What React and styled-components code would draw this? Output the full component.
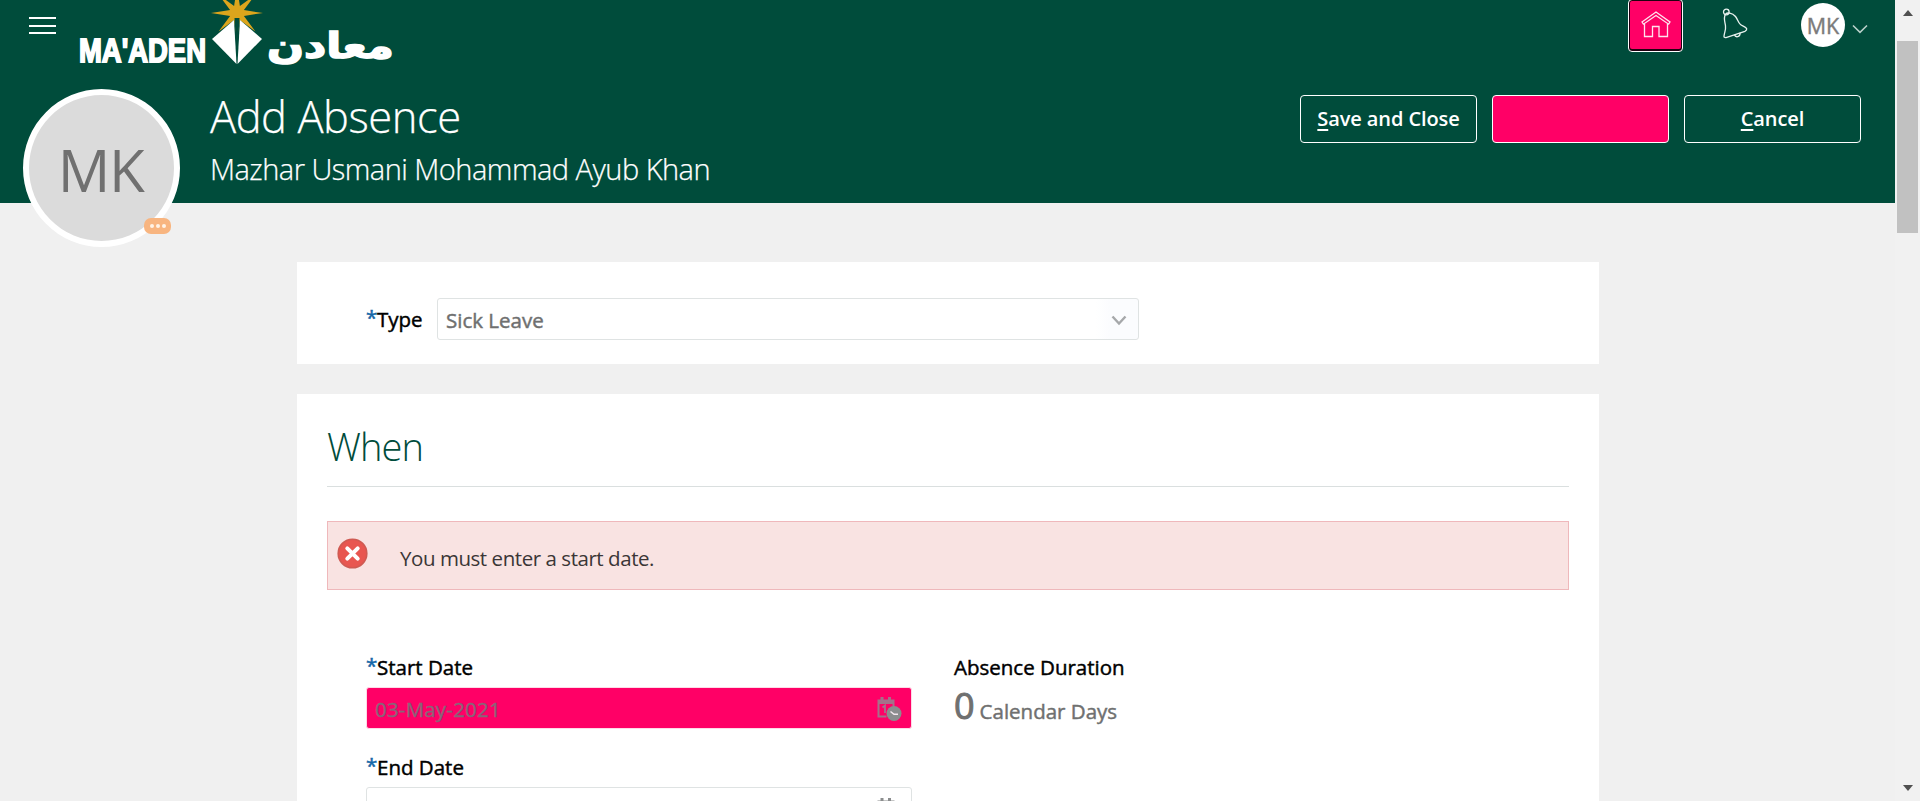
import React from "react";
import styled, { createGlobalStyle } from "styled-components";

const green = "#004c3b";
const pink = "#ff0066";

const GlobalStyle = createGlobalStyle`
  * { box-sizing: border-box; }
  html, body { margin: 0; height: 801px; overflow: hidden; background: #f0f0f0; }
  body { font-family: "Open Sans", "Noto Sans", sans-serif; color: #000; }
`;

const Window = styled.div`
  display: flex;
  height: 801px;
  overflow: hidden;
`;

const Page = styled.div`
  width: 1895px;
  height: 801px;
  overflow: hidden;
`;

const Header = styled.header`
  height: 203px;
  background: ${green};
  color: #fff;
`;

const TopBar = styled.div`
  height: 72px;
  display: flex;
  align-items: flex-start;
`;

const MenuButton = styled.div`
  width: 27px;
  margin: 17px 0 0 29px;
  display: flex;
  flex-direction: column;
  gap: 5.5px;
`;

const MenuLine = styled.span`
  height: 2px;
  background: #fff;
`;

const Logo = styled.svg`
  display: block;
  margin-left: 19px;
`;

const TopActions = styled.div`
  margin-left: auto;
  display: flex;
  align-items: flex-start;
`;

const HomeButton = styled.div`
  width: 55px;
  height: 53px;
  margin-top: -1px;
  border: 1px solid #fff;
  border-radius: 4px;
  background: #200010;
  padding: 1px 1px 2px;
  display: flex;
`;

const HomeFill = styled.div`
  flex: 1;
  border-radius: 2px;
  background: ${pink};
  display: flex;
  justify-content: center;
  padding-top: 9px;
`;

const BellIcon = styled.svg`
  margin: 8px 0 0 38px;
`;

const UserBadge = styled.div`
  width: 44px;
  height: 44px;
  margin: 3px 0 0 51px;
  border-radius: 50%;
  background: #fff;
  color: #7b7b7b;
  font-size: 21.5px;
  line-height: 46px;
  letter-spacing: 0;
  -webkit-text-stroke: 0.4px #7b7b7b;
  display: flex;
  justify-content: center;
`;

const UserChevron = styled.svg`
  margin: 24px 27px 0 7px;
`;

const TitleRow = styled.div`
  display: flex;
  align-items: flex-start;
`;

const Avatar = styled.div`
  position: relative;
  width: 157px;
  height: 158px;
  margin: 17px 0 0 23px;
  border: 6px solid #fff;
  border-radius: 50%;
  background: #dbdbdb;
  color: #707070;
  font-size: 58.5px;
  line-height: 149px;
  letter-spacing: -1.5px;
  text-indent: -2px;
  text-align: center;
`;

const StatusBadge = styled.div`
  position: absolute;
  left: 115px;
  top: 123px;
  width: 27px;
  height: 16px;
  border-radius: 7px;
  background: #f8b580;
  display: flex;
  align-items: center;
  justify-content: center;
  gap: 2px;
`;

const Dot = styled.span`
  width: 4px;
  height: 4px;
  border-radius: 50%;
  background: #fff3e6;
`;

const Titles = styled.div`
  margin: 17px 0 0 30px;
  font-weight: 300;
  white-space: nowrap;
  -webkit-text-stroke: 0.25px #fff;
`;

const Title = styled.h1`
  margin: 0;
  font-weight: 300;
  font-size: 43.5px;
  line-height: 56px;
  letter-spacing: -0.45px;
`;

const Subtitle = styled.div`
  margin-top: 4px;
  font-size: 29px;
  line-height: 40px;
  letter-spacing: -0.52px;
`;

const Buttons = styled.div`
  display: flex;
  gap: 15px;
  margin: 23px 34px 0 auto;
`;

const Button = styled.div`
  width: 177px;
  height: 48px;
  border: 1px solid #fff;
  border-radius: 4px;
  background: ${(p) => (p.$hot ? pink : "transparent")};
  font-size: 20px;
  font-weight: 600;
  line-height: 46px;
  letter-spacing: -0.1px;
  text-align: center;
  white-space: nowrap;
  u { text-underline-offset: 3px; text-decoration-thickness: 2px; }
`;

const Content = styled.main`
  width: 1302px;
  margin: 59px 0 0 297px;
  display: flex;
  flex-direction: column;
  gap: 30px;
`;

const Card = styled.section`
  background: #fff;
  height: ${(p) => p.$height}px;
`;

const TypeRow = styled.div`
  display: flex;
  align-items: center;
  padding: 36px 0 0 69px;
`;

const Label = styled.div`
  display: flex;
  font-size: 20.5px;
  line-height: 28px;
  white-space: nowrap;
  -webkit-text-stroke: 0.45px #000;
`;

const Star = styled.span`
  width: 11px;
  color: #1567a8;
  line-height: 24px;
  -webkit-text-stroke: 0.5px #1567a8;
`;

const Select = styled.div`
  width: 702px;
  height: 42px;
  margin-left: auto;
  margin-right: 460px;
  border: 1px solid #dfe3e3;
  border-radius: 3px;
  background: linear-gradient(90deg, #fff 94%, #fbfcfe 96%);
  display: flex;
  align-items: center;
  justify-content: space-between;
  padding: 2px 11px 0 8px;
  color: #6f7070;
  font-size: 20.5px;
  line-height: 28px;
  -webkit-text-stroke: 0.45px #6f7070;
`;

const SectionTitle = styled.h2`
  margin: 0 30px;
  height: 93px;
  padding-top: 28px;
  border-bottom: 1px solid #dadfdf;
  color: ${green};
  font-size: 38px;
  font-weight: 300;
  line-height: 48px;
  letter-spacing: -0.9px;
`;

const ErrorBox = styled.div`
  height: 69px;
  margin: 34px 30px 0;
  border: 1px solid #efb8bb;
  background: #f9e3e2;
  display: flex;
  align-items: flex-start;
  color: #3b3636;
  font-size: 20.5px;
  line-height: 28px;
  letter-spacing: -0.45px;
  svg { margin: 16px 0 0 9px; }
`;

const ErrorText = styled.span`
  margin: 22px 0 0 32px;
  white-space: nowrap;
`;

const Form = styled.div`
  display: flex;
  margin: 63px 0 0 69px;
`;

const Fields = styled.div`
  width: 546px;
`;

const DateField = styled.div`
  height: 42px;
  margin: 6px 0 24px;
  border: 1px solid ${(p) => (p.$hot ? "#ffd9e6" : "#dfe3e3")};
  border-radius: 3px;
  background: ${(p) => (p.$hot ? pink : "#fff")};
  display: flex;
  justify-content: space-between;
  padding: 0 9px 0 8px;
  color: #8a6478;
  font-size: 20.5px;
  line-height: 43px;
  letter-spacing: 0.2px;
  -webkit-text-stroke: 0.4px #8a6478;
  svg { margin-top: ${(p) => (p.$hot ? 9 : 10)}px; }
`;

const Duration = styled.div`
  margin-left: 42px;
`;

const DurationValue = styled.div`
  display: flex;
  align-items: baseline;
  gap: 5px;
  color: #6f7070;
  font-size: 20.5px;
  line-height: 50px;
  white-space: nowrap;
  -webkit-text-stroke: 0.45px #6f7070;
`;

const BigNumber = styled.span`
  font-size: 36px;
  -webkit-text-stroke: 1px #6f7070;
`;

const Scrollbar = styled.div`
  width: 25px;
  background: #f1f1f1;
  display: flex;
  flex-direction: column;
  align-items: center;
`;

const Thumb = styled.div`
  width: 21px;
  height: 192px;
  margin-top: 25px;
  background: #c1c1c1;
`;

const Arrow = styled.span`
  width: 0;
  height: 0;
  border: 5.5px solid transparent;
  border-top-width: ${(p) => (p.$down ? 6 : 0)}px;
  border-bottom-width: ${(p) => (p.$down ? 0 : 6)}px;
  border-top-color: #505050;
  border-bottom-color: #505050;
  margin-top: ${(p) => (p.$down ? "auto" : "10px")};
  margin-bottom: ${(p) => (p.$down ? "10px" : "0")};
`;

function starPoints() {
  const pts = [];
  for (let i = 0; i < 16; i++) {
    const r = i % 2 ? 7.5 : 26;
    const a = (Math.PI * i) / 8;
    pts.push(`${(162 + r * Math.cos(a)).toFixed(1)},${(13 + r * Math.sin(a)).toFixed(1)}`);
  }
  return pts.join(" ");
}

function MaadenLogo() {
  return (
    <Logo width="325" height="70" viewBox="0 0 325 70">
      <polygon points={starPoints()} fill="#dca51c" />
      <polygon points="159,20 137,39 161.5,64" fill="#fff" />
      <polygon points="165,20 187,39 162.5,64" fill="#fff" />
      <polygon points="159.5,18 164.5,18 162,58" fill={green} />
      <text x="4" y="62" fill="#fff" stroke="#fff" strokeWidth="1.8" fontFamily="'Liberation Sans', sans-serif" fontWeight="700" fontSize="33" textLength="127" lengthAdjust="spacingAndGlyphs">MA'ADEN</text>
      <text x="319" y="58" direction="rtl" fill="#fff" stroke="#fff" strokeWidth="1.5" fontFamily="'DejaVu Sans', sans-serif" fontWeight="700" fontSize="35" textLength="127" lengthAdjust="spacingAndGlyphs">معادن</text>
    </Logo>
  );
}

function CalendarIcon({ tone }) {
  return (
    <svg width="25" height="25" viewBox="0 0 25 25">
      <path d="M9.5 19.5H1.5V3.5h15v6" fill="none" stroke={tone} strokeWidth="2" />
      <path d="M1 3h16v4H1zM3.5 0h3v4h-3zM11 0h3v4h-3z" fill={tone} />
      <path d="M5.5 10.5L8 8.5V16" fill="none" stroke={tone} strokeWidth="1.8" />
      <circle cx="17" cy="16.5" r="7.5" fill="#8b8d8e" />
      <path d="M13.5 14.5l3.5 2.8h4" fill="none" stroke="#f3e8ee" strokeWidth="1.5" />
    </svg>
  );
}

export default function App() {
  return (
    <Window>
      <GlobalStyle />
      <Page>
        <Header>
          <TopBar>
            <MenuButton><MenuLine /><MenuLine /><MenuLine /></MenuButton>
            <MaadenLogo />
            <TopActions>
              <HomeButton>
                <HomeFill>
                  <svg width="30" height="28" viewBox="0 0 30 28" fill="none" stroke="#ffe3ee" strokeWidth="1.3">
                    <path d="M1 12L15 2l14 10-1.4 2.2L15 5.5 2.4 14.2z" />
                    <path d="M3.5 14v12.500h8V16.500h6.500v10h8.500V14" />
                  </svg>
                </HomeFill>
              </HomeButton>
              <BellIcon width="29" height="32" viewBox="0 0 29 32" fill="none" stroke="#e8f2ef" strokeWidth="1.3">
                <path d="M4.5 6.2C6 4.500 11 4.200 14.500 8.500c2.500 3.200 2.500 6 5 8 2 1.600 5.500 2.500 6.200 4.300.3 1-.8 2-1.800 2.500L5 29.500c-1.300.3-2.200-.3-2-1.500C3.500 24 5 22 4.500 18c-.3-4-2.500-7.500 0-11.800z" />
                <circle cx="5.300" cy="4" r="2.800" />
                <path d="M13.500 26.800c.8 2.800 6 2.800 5.500-2" />
              </BellIcon>
              <UserBadge>MK</UserBadge>
              <UserChevron width="16" height="10" viewBox="0 0 16 10" fill="none" stroke="#b9d0ca" strokeWidth="1.6">
                <path d="M1 1.500l7 6.800 7-6.800" />
              </UserChevron>
            </TopActions>
          </TopBar>
          <TitleRow>
            <Avatar>
              MK
              <StatusBadge><Dot /><Dot /><Dot /></StatusBadge>
            </Avatar>
            <Titles>
              <Title>Add Absence</Title>
              <Subtitle>Mazhar Usmani Mohammad Ayub Khan</Subtitle>
            </Titles>
            <Buttons>
              <Button><u>S</u>ave and Close</Button>
              <Button $hot />
              <Button><u>C</u>ancel</Button>
            </Buttons>
          </TitleRow>
        </Header>
        <Content>
          <Card $height={102}>
            <TypeRow>
              <Label><Star>*</Star>Type</Label>
              <Select>
                Sick Leave
                <svg width="16" height="11" viewBox="0 0 16 11" fill="none" stroke="#a6a8aa" strokeWidth="2.4">
                  <path d="M1.500 1.500L8 8.500l6.500-7" />
                </svg>
              </Select>
            </TypeRow>
          </Card>
          <Card $height={440}>
            <SectionTitle>When</SectionTitle>
            <ErrorBox>
              <svg width="31" height="31" viewBox="0 0 31 31">
                <circle cx="15.500" cy="15.500" r="14.300" fill="#e85650" stroke="#cf5a52" strokeWidth="1.600" />
                <path d="M10.300 10.300l10.400 10.400M20.700 10.300L10.300 20.700" stroke="#fff" strokeWidth="4" strokeLinecap="round" />
              </svg>
              <ErrorText>You must enter a start date.</ErrorText>
            </ErrorBox>
            <Form>
              <Fields>
                <Label><Star>*</Star>Start Date</Label>
                <DateField $hot>03-May-2021<CalendarIcon tone="#a5708a" /></DateField>
                <Label><Star>*</Star>End Date</Label>
                <DateField><span /><CalendarIcon tone="#8b8d8e" /></DateField>
              </Fields>
              <Duration>
                <Label>Absence Duration</Label>
                <DurationValue><BigNumber>0</BigNumber>Calendar Days</DurationValue>
              </Duration>
            </Form>
          </Card>
        </Content>
      </Page>
      <Scrollbar>
        <Arrow />
        <Thumb />
        <Arrow $down />
      </Scrollbar>
    </Window>
  );
}
